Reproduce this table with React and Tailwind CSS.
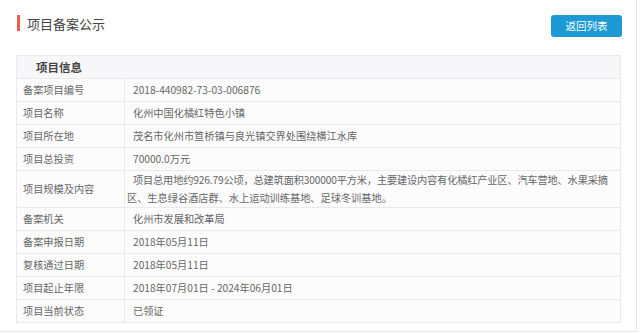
const rows = [
  ['备案项目编号', '2018-440982-73-03-006876'],
  ['项目名称', '化州中国化橘红特色小镇'],
  ['项目所在地', '茂名市化州市笪桥镇与良光镇交界处围绕横江水库'],
  ['项目总投资', '70000.0万元'],
  [
    '项目规模及内容',
    <>
      <span className="whitespace-nowrap tracking-[-0.15px]">
        项目总用地约926.79公顷，总建筑面积300000平方米，主要建设内容有化橘红产业区、汽车营地、水果采摘
      </span>
      <br />
      区、生息绿谷酒店群、水上运动训练基地、足球冬训基地。
    </>,
  ],
  ['备案机关', '化州市发展和改革局'],
  ['备案申报日期', '2018年05月11日'],
  ['复核通过日期', '2018年05月11日'],
  ['项目起止年限', '2018年07月01日 - 2024年06月01日'],
  ['项目当前状态', '已领证'],
];

export default function App() {
  return (
    <div className="w-[640px] h-[334px] bg-white overflow-hidden font-['Noto_Sans_CJK_SC','Noto_Sans',sans-serif]">
      <div className="w-[637px] h-[332px] border-r border-b border-[#e6e6ec] pl-[16px] pt-[15px]">
        <div className="flex items-start justify-between w-[604px]">
          <div className="flex items-center h-[16px]">
            <span className="w-[3px] h-[16px] bg-[#e8604c] ml-[1px]" />
            <h1 className="ml-[7px] text-[13px] leading-[16px] text-[#444] mt-[2px]">项目备案公示</h1>
          </div>
          <button className="w-[71px] h-[22px] rounded-[3px] bg-[#1d9ad6] text-white text-[10.5px] leading-[22px] -mr-[2px]">
            返回列表
          </button>
        </div>
        <table className="mt-[18px] w-[605px] border-collapse text-[10.2px] text-[#666] bg-[#fcfcfd]">
          <tbody>
            <tr className="h-[23px] bg-[#f7f7f9]">
              <td colSpan={2} className="border border-[#eaeaee] pl-[19px] font-bold text-[11.5px] leading-[14px] text-[#444] p-0">
                项目信息
              </td>
            </tr>
            {rows.map(([label, value]) => (
              <tr key={label} className="h-[23px]">
                <td className="w-[108px] border border-[#eaeaee] pl-[6px] leading-[14px] py-0">{label}</td>
                <td className="border border-[#eaeaee] pl-[2px] indent-[6px] leading-[18px] py-0">{value}</td>
              </tr>
            ))}
          </tbody>
        </table>
      </div>
    </div>
  );
}
